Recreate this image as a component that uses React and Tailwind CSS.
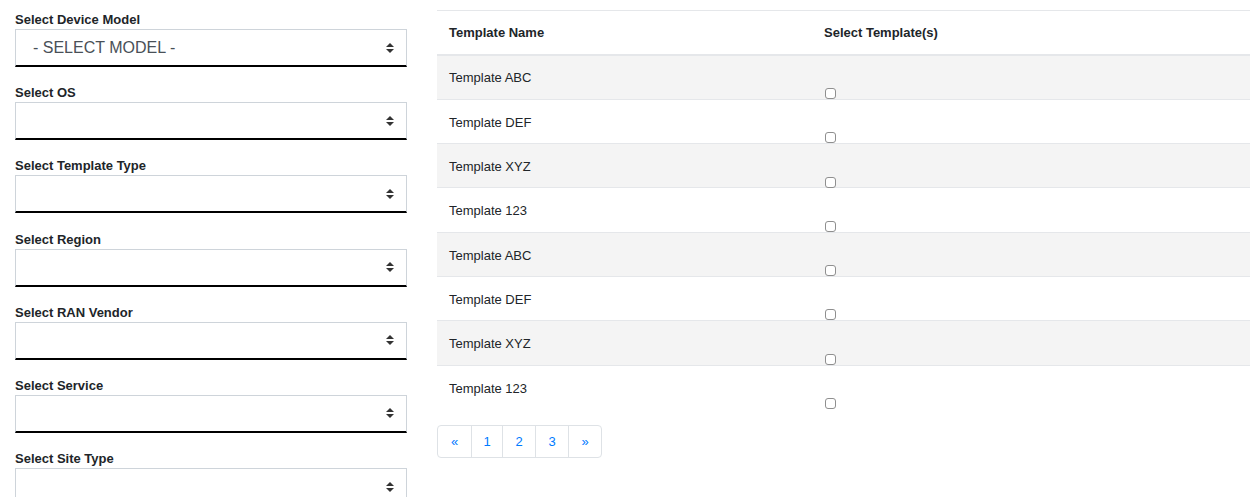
import React from 'react';

const fields = [
    { label: 'Select Device Model', value: '- SELECT MODEL -' },
    { label: 'Select OS', value: '' },
    { label: 'Select Template Type', value: '' },
    { label: 'Select Region', value: '' },
    { label: 'Select RAN Vendor', value: '' },
    { label: 'Select Service', value: '' },
    { label: 'Select Site Type', value: '' },
];

const templates = [
    'Template ABC',
    'Template DEF',
    'Template XYZ',
    'Template 123',
    'Template ABC',
    'Template DEF',
    'Template XYZ',
    'Template 123',
];

const Arrows = () => (
    <svg width="8" height="10" viewBox="0 0 8 10" className="shrink-0">
        <path d="M4 0 L8 4 L0 4 Z" fill="#333" />
        <path d="M0 6 L8 6 L4 10 Z" fill="#333" />
    </svg>
);

const SelectField = ({ label, value }) => (
    <div className="mb-[15.2px]">
        <div className="h-5 leading-[22px] text-[13px] font-bold text-[#212529]">{label}</div>
        <div className="h-[38px] flex items-center justify-between pl-[17px] pr-[12px] border border-[#ced4da] border-b-2 border-b-black bg-white">
            <span className="text-[16px] text-[#495057]">{value}</span>
            <Arrows />
        </div>
    </div>
);

const App = () => {
    return (
        <div className="w-[1260px] h-[497px] overflow-hidden bg-white flex pl-[15px] pr-[10px] pt-[9px] font-['Liberation_Sans',Arial,sans-serif] text-[#212529]">
            <div className="w-[392px] shrink-0">
                {fields.map((f) => (
                    <SelectField key={f.label} label={f.label} value={f.value} />
                ))}
            </div>

            <div className="ml-[30px] flex-1 pt-px">
                <div className="border-t border-b-2 border-[#e5e7ea] h-[45.5px] flex items-center text-[13px] font-bold">
                    <div className="w-[375px] px-3">Template Name</div>
                    <div className="px-3">Select Template(s)</div>
                </div>
                {templates.map((t, i) => (
                    <div
                        key={i}
                        className={`h-[44.3px] flex border-b border-[#e5e7ea] text-[13px] ${i % 2 === 0 ? 'bg-[#f4f4f4]' : 'bg-white'} ${i === templates.length - 1 ? 'border-b-0' : ''}`}
                    >
                        <div className="w-[375px] px-3 pt-[2px] flex items-center">{t}</div>
                        <div className="px-3 pt-[32.5px]">
                            <span className="block w-[11px] h-[11px] ml-px border border-[#8f8f8f] rounded-[3px] bg-white" />
                        </div>
                    </div>
                ))}

                <div className="mt-[15px] flex">
                    <div className="flex border border-[#dee2e6] rounded-[4px] h-[33px] text-[13px] text-[#007bff]">
                        <div className="w-[33px] flex items-center justify-center">«</div>
                        <div className="w-[31px] flex items-center justify-center border-l border-[#dee2e6]">1</div>
                        <div className="w-[33px] flex items-center justify-center border-l border-[#dee2e6]">2</div>
                        <div className="w-[33px] flex items-center justify-center border-l border-[#dee2e6]">3</div>
                        <div className="w-[33px] flex items-center justify-center border-l border-[#dee2e6]">»</div>
                    </div>
                </div>
            </div>
        </div>
    );
};

export default App;
